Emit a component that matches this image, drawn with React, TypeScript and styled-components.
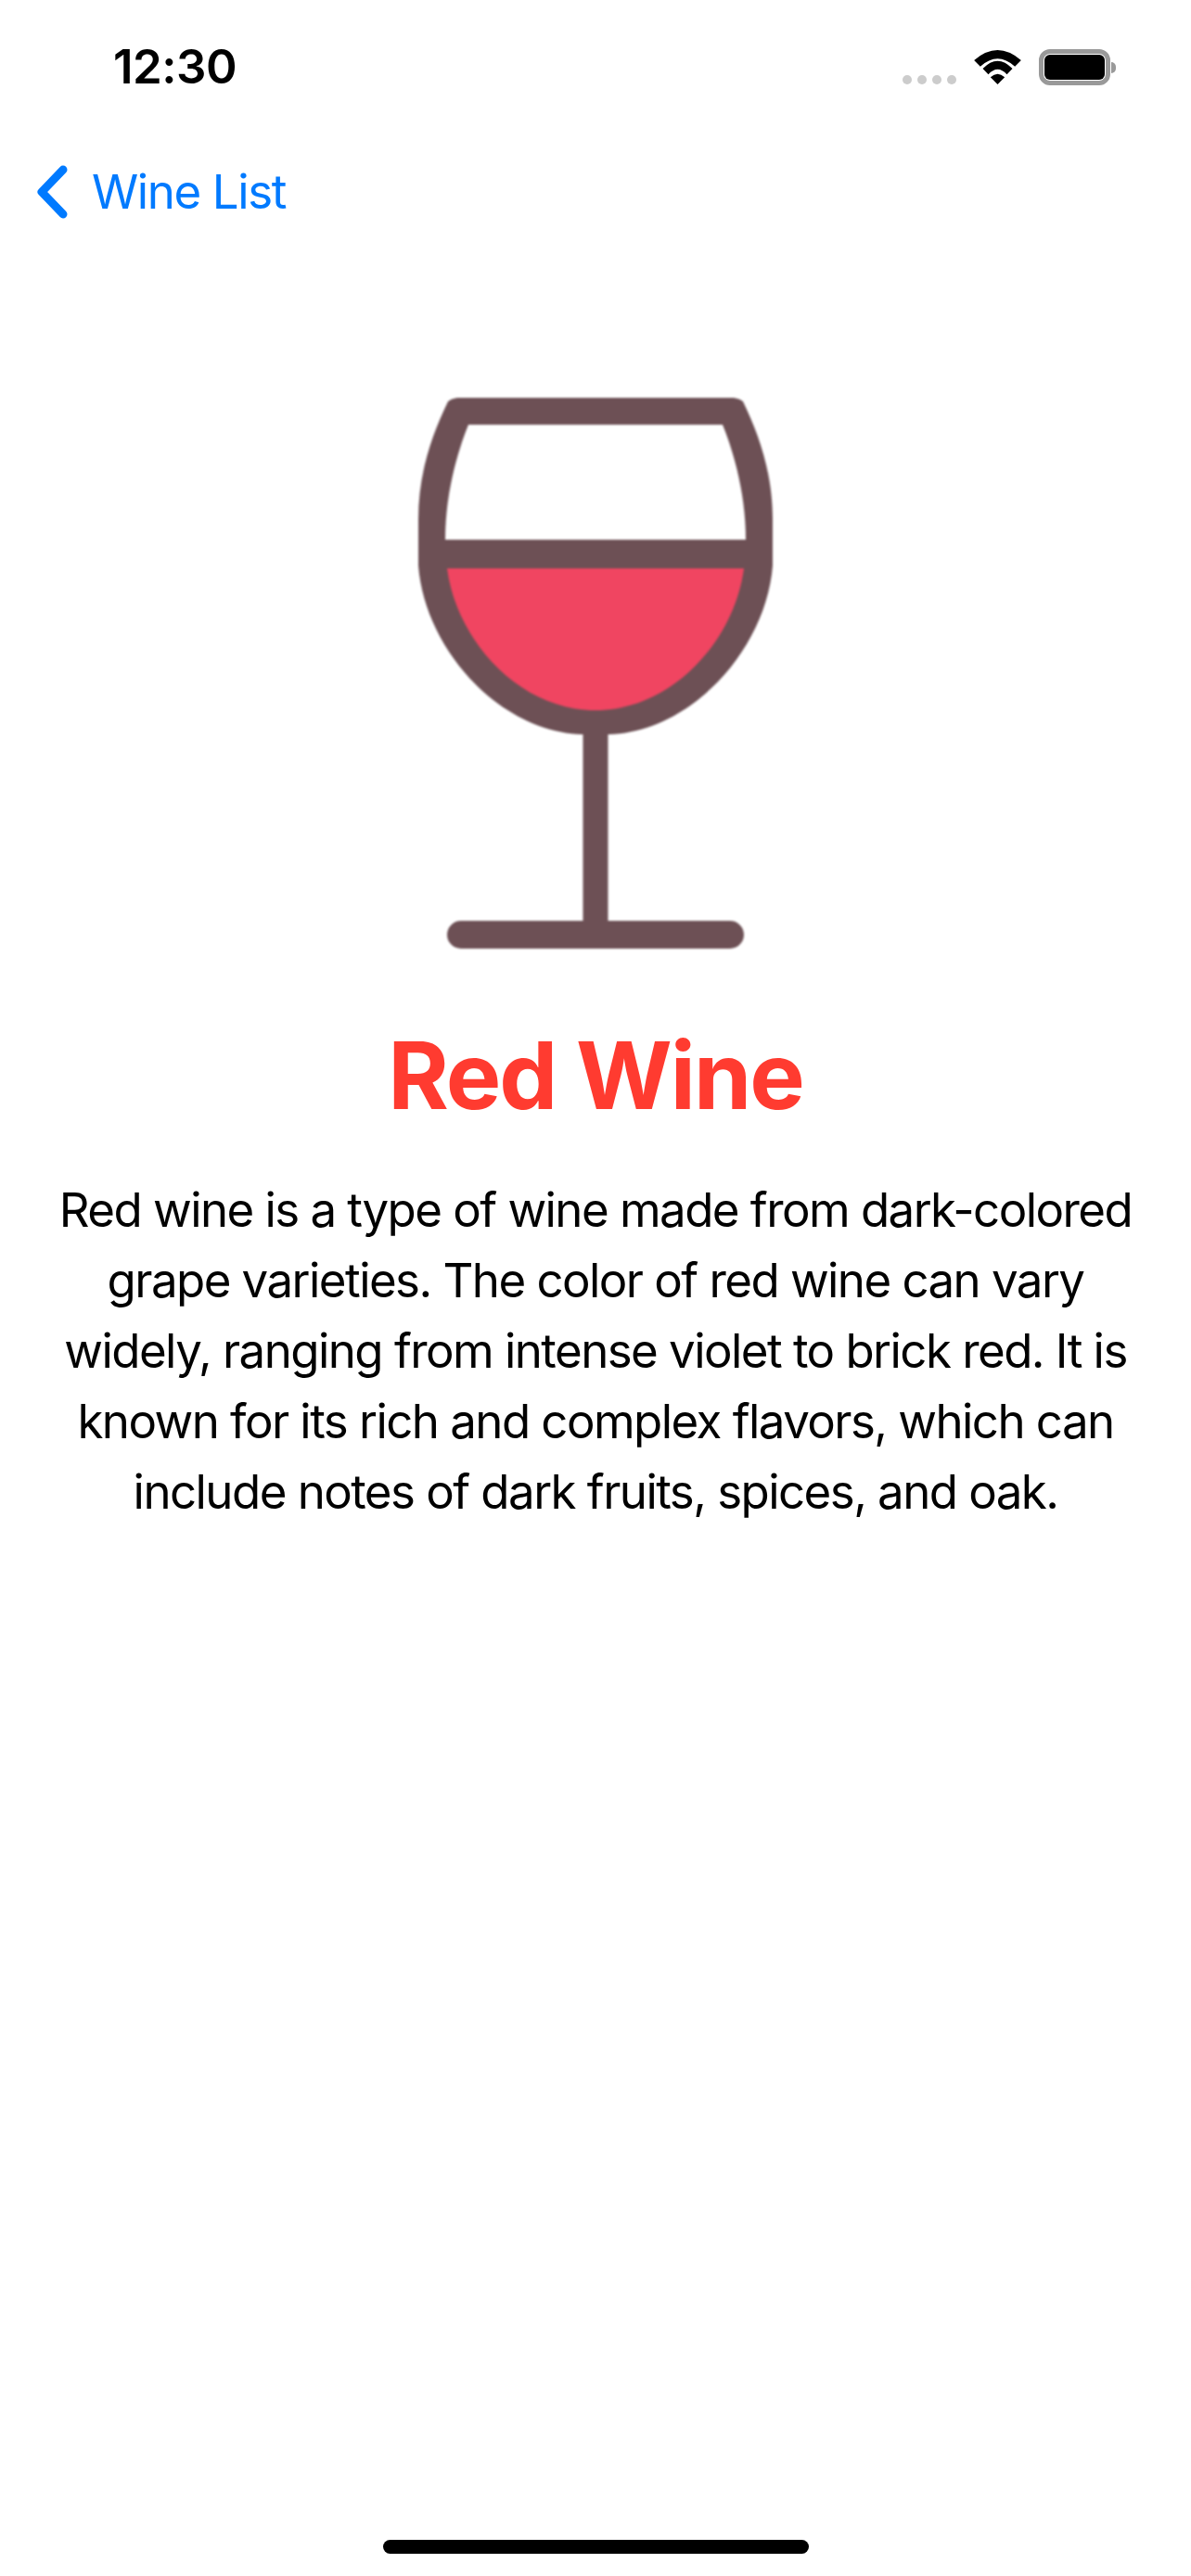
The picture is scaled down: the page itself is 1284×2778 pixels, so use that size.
import React from 'react';
import styled, { createGlobalStyle } from 'styled-components';

const GlobalStyle = createGlobalStyle`
  html, body {
    margin: 0;
    padding: 0;
    background: #fff;
    overflow: hidden;
  }
  * {
    box-sizing: border-box;
  }
`;

const Screen = styled.div`
  width: 1284px;
  height: 2778px;
  display: flex;
  flex-direction: column;
  align-items: stretch;
  font-family: Inter, 'Liberation Sans', sans-serif;
  color: #000;
  background: #fff;
`;

const StatusBar = styled.div`
  height: 132px;
  padding: 44px 87px 0 122px;
  display: flex;
  justify-content: space-between;
  align-items: flex-start;
`;

const Clock = styled.div`
  font-size: 51px;
  font-weight: 600;
  line-height: 56px;
  letter-spacing: -0.5px;
`;

const StatusIcons = styled.div`
  display: flex;
  align-items: flex-end;
  padding-top: 9px;
`;

const SignalDots = styled.div`
  display: flex;
  gap: 6px;
  margin: 0 19px 1px 0;
`;

const SignalDot = styled.span`
  width: 10px;
  height: 10px;
  border-radius: 50%;
  background: #cccccc;
`;

const WifiIcon = styled.svg`
  width: 51px;
  height: 37px;
  margin: 0 19px 1px 0;
`;

const Battery = styled.div`
  width: 77px;
  height: 39px;
  border: 5px solid #999;
  border-radius: 12px;
  padding: 1px;
  position: relative;
  &::after {
    content: '';
    position: absolute;
    right: -11px;
    top: 9px;
    width: 5px;
    height: 12px;
    background: #999;
    border-radius: 0 6px 6px 0;
  }
`;

const BatteryFill = styled.div`
  height: 100%;
  background: #000;
  border-radius: 6px;
`;

const NavBar = styled.div`
  height: 146px;
  padding-left: 40px;
  display: flex;
  align-items: flex-start;
  color: #007aff;
`;

const BackChevron = styled.svg`
  width: 34px;
  height: 58px;
  margin: 46px 25px 0 0;
`;

const BackLabel = styled.div`
  font-size: 51px;
  line-height: 56px;
  letter-spacing: -1.4px;
  margin-top: 47px;
`;

const Detail = styled.main`
  display: flex;
  flex-direction: column;
  align-items: center;
  padding: 132px 50px 0;
`;

const Glass = styled.svg`
  width: 424px;
  height: 630px;
  filter: blur(0.9px);
`;

const Title = styled.h1`
  margin: 60px 0 0;
  font-size: 100px;
  font-weight: 700;
  line-height: 120px;
  letter-spacing: -2px;
  color: #ff3b30;
`;

const Description = styled.p`
  margin: 47px 0 0;
  font-size: 51px;
  line-height: 76px;
  letter-spacing: -1.55px;
  text-align: center;
`;

const HomeIndicator = styled.div`
  width: 459px;
  height: 15px;
  border-radius: 8px;
  background: #000;
  margin: auto auto 24px;
`;

// coordinates are page pixels, the bowl is cut flat at the sides and top like the source image
const WineGlass = () => (
  <Glass viewBox="430 410 424 630">
    <path
      fill="#6d5055"
      d="M493 429 H791 Q798 430 801 433 C818 468 833 510 833 560 V610 C826 700 745 790 655.5 792 V993 H787 A15 15 0 0 1 787 1023 H497 A15 15 0 0 1 497 993 H628.5 V792 C539 790 458 700 451 610 V560 C451 510 466 468 483 433 Q486 430 493 429 Z"
    />
    <path fill="#fff" d="M505 458 H779 C792 490 804 535 804 582 H480 C480 535 492 490 505 458 Z" />
    <path fill="#f04561" d="M482 613 H802 C792 690 725 766 642 766 C559 766 492 690 482 613 Z" />
  </Glass>
);

const App = () => (
  <Screen>
    <GlobalStyle />
    <StatusBar>
      <Clock>12:30</Clock>
      <StatusIcons>
        <SignalDots>
          <SignalDot />
          <SignalDot />
          <SignalDot />
          <SignalDot />
        </SignalDots>
        <WifiIcon viewBox="0 0 152 111">
          <path d="M0 33 Q76 -33 152 33 L132 53 Q76 2 20 53 Z" />
          <path d="M28 60 Q76 10 124 60 L106 79 Q76 46 46 79 Z" />
          <path d="M53 88 Q76 66 99 88 L76 111 Z" />
        </WifiIcon>
        <Battery>
          <BatteryFill />
        </Battery>
      </StatusIcons>
    </StatusBar>
    <NavBar>
      <BackChevron viewBox="0 0 34 58">
        <path
          d="M28 5 L5 29 L28 53"
          fill="none"
          stroke="#007aff"
          strokeWidth="9"
          strokeLinecap="round"
          strokeLinejoin="round"
        />
      </BackChevron>
      <BackLabel>Wine List</BackLabel>
    </NavBar>
    <Detail>
      <WineGlass />
      <Title>Red Wine</Title>
      <Description>
        Red wine is a type of wine made from dark-colored grape varieties. The color of red wine can vary widely,
        ranging from intense violet to brick red. It is known for its rich and complex flavors, which can include notes
        of dark fruits, spices, and oak.
      </Description>
    </Detail>
    <HomeIndicator />
  </Screen>
);

export default App;
